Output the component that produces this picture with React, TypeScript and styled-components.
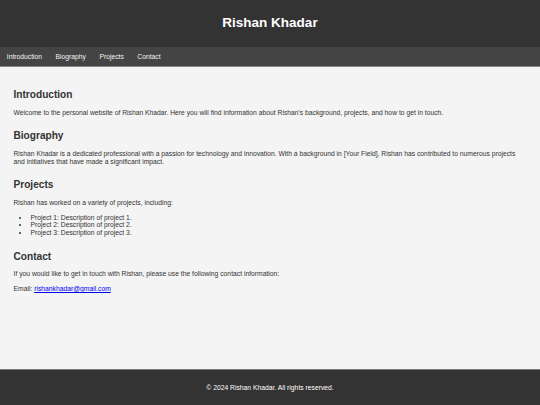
import styled, { createGlobalStyle } from "styled-components";

const GlobalStyle = createGlobalStyle`
  html, body {
    margin: 0;
    padding: 0;
  }

  body {
    font-family: "Liberation Sans", Arial, sans-serif;
    background: #f4f4f4;
    color: #333;
    line-height: 1.15;
  }
`;

const Page = styled.div`
  display: flex;
  flex-direction: column;
  min-height: 100vh;
`;

const Header = styled.header`
  background: #333;
  color: #fff;
  text-align: center;
  padding: 15.2px 0 16.3px;
`;

const Title = styled.h1`
  margin: 0;
  font-size: 13.5px;
  font-weight: bold;
`;

const Nav = styled.nav`
  display: flex;
  gap: 13.5px;
  background: #444;
  padding: 5.9px 6.75px 5.35px;
  border-bottom: 1px solid #888;
`;

const NavLink = styled.a`
  color: #f2f2f2;
  text-decoration: none;
  font-size: 6.75px;
`;

const Main = styled.main`
  flex: 1;
  display: flex;
  flex-direction: column;
  gap: 13.8px;
  padding: 22px 13.5px;
`;

const Section = styled.section`
  display: flex;
  flex-direction: column;
  gap: 7px;
`;

const Heading = styled.h2`
  margin: 0 0 1px;
  font-size: 10.125px;
  font-weight: bold;
`;

const Text = styled.p`
  margin: 0;
  font-size: 6.75px;
`;

const List = styled.ul`
  margin: 0;
  padding-left: 16.9px;
  font-size: 6.75px;
  line-height: 1.15;
`;

const Link = styled.a`
  color: #0000ee;
`;

const Footer = styled.footer`
  background: #333;
  color: #fff;
  text-align: center;
  border-top: 1px solid #777;
  padding: 13.5px 0;
  font-size: 6.75px;
`;

const links = ["Introduction", "Biography", "Projects", "Contact"];

const projects = [
  "Project 1: Description of project 1.",
  "Project 2: Description of project 2.",
  "Project 3: Description of project 3.",
];

export default function App() {
  return (
    <Page>
      <GlobalStyle />
      <Header>
        <Title>Rishan Khadar</Title>
      </Header>
      <Nav>
        {links.map((label) => (
          <NavLink key={label} href={`#${label.toLowerCase()}`}>
            {label}
          </NavLink>
        ))}
      </Nav>
      <Main>
        <Section id="introduction">
          <Heading>Introduction</Heading>
          <Text>
            Welcome to the personal website of Rishan Khadar. Here you will find
            information about Rishan's background, projects, and how to get in
            touch.
          </Text>
        </Section>
        <Section id="biography">
          <Heading>Biography</Heading>
          <Text>
            Rishan Khadar is a dedicated professional with a passion for
            technology and innovation. With a background in [Your Field], Rishan
            has contributed to numerous projects and initiatives that have made a
            significant impact.
          </Text>
        </Section>
        <Section id="projects">
          <Heading>Projects</Heading>
          <Text>Rishan has worked on a variety of projects, including:</Text>
          <List>
            {projects.map((p) => (
              <li key={p}>{p}</li>
            ))}
          </List>
        </Section>
        <Section id="contact">
          <Heading>Contact</Heading>
          <Text>
            If you would like to get in touch with Rishan, please use the
            following contact information:
          </Text>
          <Text>
            Email: <Link href="mailto:rishankhadar@gmail.com">rishankhadar@gmail.com</Link>
          </Text>
        </Section>
      </Main>
      <Footer>&copy; 2024 Rishan Khadar. All rights reserved.</Footer>
    </Page>
  );
}
